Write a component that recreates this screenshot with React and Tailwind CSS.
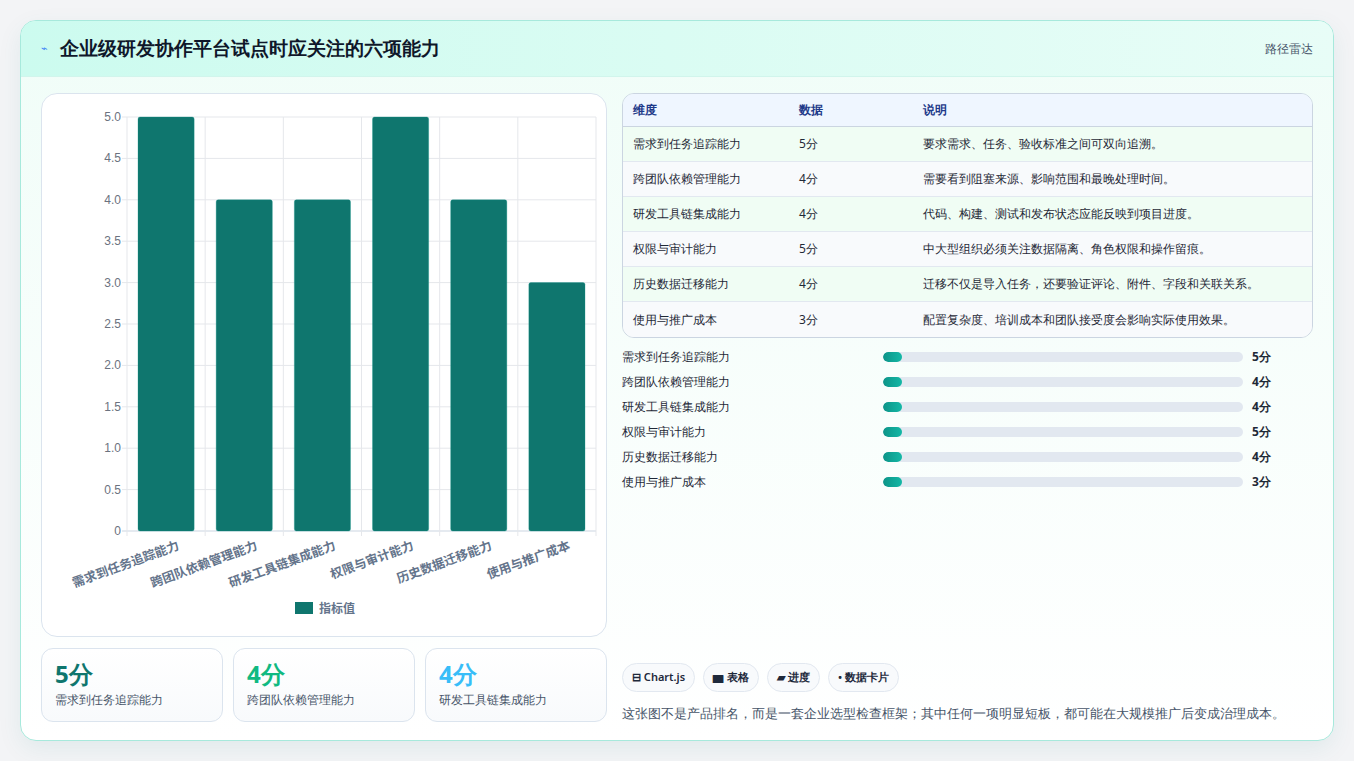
import React from "react";

const data = [
  ["需求到任务追踪能力", 5, "要求需求、任务、验收标准之间可双向追溯。"],
  ["跨团队依赖管理能力", 4, "需要看到阻塞来源、影响范围和最晚处理时间。"],
  ["研发工具链集成能力", 4, "代码、构建、测试和发布状态应能反映到项目进度。"],
  ["权限与审计能力", 5, "中大型组织必须关注数据隔离、角色权限和操作留痕。"],
  ["历史数据迁移能力", 4, "迁移不仅是导入任务，还要验证评论、附件、字段和关联关系。"],
  ["使用与推广成本", 3, "配置复杂度、培训成本和团队接受度会影响实际使用效果。"],
];

function Chart() {
  const x0 = 85, x1 = 554, y0 = 23, y1 = 437;
  const cw = (x1 - x0) / 6;
  const ticks = [5, 4.5, 4, 3.5, 3, 2.5, 2, 1.5, 1, 0.5, 0];
  const y = (v) => y1 - (v / 5) * (y1 - y0);
  return (
    <svg width="566" height="543" className="block">
      {ticks.map((t) => (
        <g key={t}>
          <line x1={x0 - 5} x2={x1} y1={y(t)} y2={y(t)} stroke={t === 0 ? "#cbd5e1" : "#e5e7eb"} />
          <text x={x0 - 6} y={y(t) + 4} textAnchor="end" fontSize="12" fill="#6b7280" fontFamily="Liberation Sans, sans-serif">
            {t === 0 ? "0" : t.toFixed(1)}
          </text>
        </g>
      ))}
      {[0, 1, 2, 3, 4, 5, 6].map((i) => (
        <line key={i} x1={x0 + i * cw} x2={x0 + i * cw} y1={y0} y2={y1 + 5} stroke="#e5e7eb" />
      ))}
      {data.map(([n, v], i) => (
        <g key={n}>
          <rect x={x0 + i * cw + 11} y={y(v)} width={cw - 22} height={y1 - y(v)} rx="2" fill="#0f766e" stroke="#0d9488" strokeOpacity="0.3" />
          <text
            transform={`translate(${x0 + i * cw + cw / 2 + 14},${y1 + 18}) rotate(-20)`}
            textAnchor="end"
            fontSize="12.5"
            fontWeight="700"
            fill="#64748b"
            fontFamily="Noto Sans CJK SC, sans-serif"
          >
            {n}
          </text>
        </g>
      ))}
      <rect x="253" y="508" width="18" height="12" fill="#0f766e" />
      <text x="277" y="519" fontSize="12" fontWeight="700" fill="#64748b" fontFamily="Noto Sans CJK SC, sans-serif">指标值</text>
    </svg>
  );
}

export default function App() {
  const stats = [
    ["5分", "需求到任务追踪能力", "text-[#0f766e]"],
    ["4分", "跨团队依赖管理能力", "text-[#10b981]"],
    ["4分", "研发工具链集成能力", "text-[#38bdf8]"],
  ];
  return (
    <div className="w-[1354px] h-[761px] bg-[#f3f4f6] p-5 pt-5 font-['Noto_Sans_CJK_SC',sans-serif]">
      <div className="w-[1314px] h-[721px] rounded-2xl border border-[#a7e9dc] bg-gradient-to-b from-[#f0fdf8] to-[#ffffff] overflow-hidden shadow-[0_8px_24px_rgba(15,118,110,0.08)] flex flex-col">
        <div className="h-[56px] flex items-center justify-between px-5 bg-gradient-to-r from-[#ccfbef] to-[#e8fdf7] border-b border-[#d1f5ec]">
          <div className="flex items-center gap-3">
            <span className="text-[#3b82f6] text-[11px]">⌁</span>
            <span className="text-[19px] font-bold text-[#0f172a]">企业级研发协作平台试点时应关注的六项能力</span>
          </div>
          <span className="text-[12px] text-[#475569]">路径雷达</span>
        </div>
        <div className="flex gap-[15px] px-5 pt-[16px]">
          <div className="w-[566px] flex flex-col gap-[11px]">
            <div className="h-[544px] rounded-2xl border border-[#dbe4ee] bg-white overflow-hidden">
              <Chart />
            </div>
            <div className="grid grid-cols-3 gap-[10px]">
              {stats.map(([v, l, c]) => (
                <div key={l} className="h-[74px] rounded-xl border border-[#dbe4ee] bg-gradient-to-b from-white to-[#f8fafc] px-[13px] pt-[10px]">
                  <div className={`text-[24px] font-bold leading-[30px] ${c}`}>{v}</div>
                  <div className="text-[12px] text-[#475569] mt-[2px]">{l}</div>
                </div>
              ))}
            </div>
          </div>
          <div className="flex-1 flex flex-col">
            <div className="rounded-xl border border-[#cbd5e1] overflow-hidden">
              <div className="h-[33px] flex items-center bg-[#eff6ff] text-[12px] font-semibold text-[#1e3a8a] border-b border-[#cbd5e1] px-[10px]">
                <div className="w-[166px]">维度</div>
                <div className="w-[124px]">数据</div>
                <div>说明</div>
              </div>
              {data.map(([n, v, d], i) => (
                <div key={n} className={`h-[35px] flex items-center text-[12px] text-[#1f2937] px-[10px] ${i < 5 ? "border-b border-[#e2e8f0]" : ""} ${i % 2 === 0 ? "bg-[#f0fdf4]" : "bg-[#f8fafc]"}`}>
                  <div className="w-[166px]">{n}</div>
                  <div className="w-[124px]">{v}分</div>
                  <div>{d}</div>
                </div>
              ))}
            </div>
            <div className="flex flex-col gap-[7px] mt-[10px]">
              {data.map(([n, v]) => (
                <div key={n} className="h-[18px] flex items-center text-[12px] text-[#1f2937]">
                  <div className="w-[261px]">{n}</div>
                  <div className="w-[360px] h-[10px] rounded-full bg-[#e2e8f0] overflow-hidden">
                    <div className="w-[19px] h-full rounded-full bg-gradient-to-r from-[#0d9488] to-[#14b8a6]" />
                  </div>
                  <div className="ml-[9px] font-bold">{v}分</div>
                </div>
              ))}
            </div>
            <div className="mt-[172px] flex gap-[8px]">
              {["⊟ Chart.js", "▆ 表格", "▰ 进度", "• 数据卡片"].map((t) => (
                <span key={t} className="h-[29px] px-[9px] flex items-center rounded-full border border-[#e2e8f0] bg-[#f8fafc] text-[11px] font-semibold text-[#1e293b]">{t}</span>
              ))}
            </div>
            <div className="mt-[12px] text-[13px] text-[#475569]">这张图不是产品排名，而是一套企业选型检查框架；其中任何一项明显短板，都可能在大规模推广后变成治理成本。</div>
          </div>
        </div>
      </div>
    </div>
  );
}
